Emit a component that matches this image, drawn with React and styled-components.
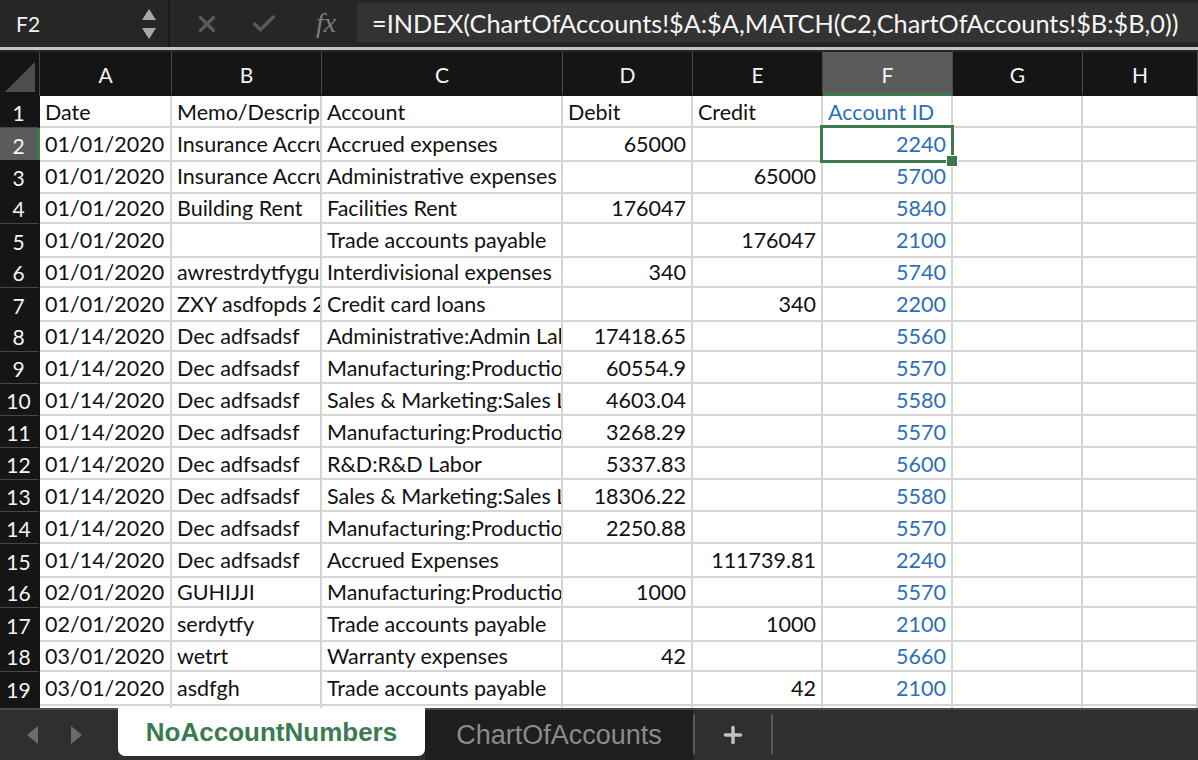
import React from "react";
import styled, { createGlobalStyle } from "styled-components";
import { X, Check, Plus } from "lucide-react";

const GlobalStyle = createGlobalStyle`
  html, body {
    margin: 0;
    padding: 0;
    background: #262626;
    overflow: hidden;
  }
  * {
    box-sizing: border-box;
  }
`;

const GRID = "40px 132px 150px 241px 130px 130px 130px 130px 1fr";
const GREEN = "#3c7a4e";
const LINE = "#d5d5d5";
const CELL_FONT = `Lato, "Open Sans", sans-serif`;

const columns = ["A", "B", "C", "D", "E", "F", "G", "H"];

const rows = [
  ["Date", "Memo/Description", "Account", "Debit", "Credit", "Account ID"],
  ["01/01/2020", "Insurance Accrual", "Accrued expenses", "65000", "", "2240"],
  ["01/01/2020", "Insurance Accrual", "Administrative expenses", "", "65000", "5700"],
  ["01/01/2020", "Building Rent", "Facilities Rent", "176047", "", "5840"],
  ["01/01/2020", "", "Trade accounts payable", "", "176047", "2100"],
  ["01/01/2020", "awrestrdytfyguhijk", "Interdivisional expenses", "340", "", "5740"],
  ["01/01/2020", "ZXY asdfopds 2019", "Credit card loans", "", "340", "2200"],
  ["01/14/2020", "Dec adfsadsf", "Administrative:Admin Labor", "17418.65", "", "5560"],
  ["01/14/2020", "Dec adfsadsf", "Manufacturing:Production Labor", "60554.9", "", "5570"],
  ["01/14/2020", "Dec adfsadsf", "Sales & Marketing:Sales Labor", "4603.04", "", "5580"],
  ["01/14/2020", "Dec adfsadsf", "Manufacturing:Production Labor", "3268.29", "", "5570"],
  ["01/14/2020", "Dec adfsadsf", "R&D:R&D Labor", "5337.83", "", "5600"],
  ["01/14/2020", "Dec adfsadsf", "Sales & Marketing:Sales Labor", "18306.22", "", "5580"],
  ["01/14/2020", "Dec adfsadsf", "Manufacturing:Production Labor", "2250.88", "", "5570"],
  ["01/14/2020", "Dec adfsadsf", "Accrued Expenses", "", "111739.81", "2240"],
  ["02/01/2020", "GUHIJJI", "Manufacturing:Production Labor", "1000", "", "5570"],
  ["02/01/2020", "serdytfy", "Trade accounts payable", "", "1000", "2100"],
  ["03/01/2020", "wetrt", "Warranty expenses", "42", "", "5660"],
  ["03/01/2020", "asdfgh", "Trade accounts payable", "", "42", "2100"],
  ["", "", "", "", "", ""],
];

const Window = styled.div`
  width: 1198px;
  height: 760px;
  display: flex;
  flex-direction: column;
  background: #262626;
  font-family: ${CELL_FONT};
`;

/* formula bar */
const FormulaBar = styled.div`
  height: 47px;
  display: flex;
  align-items: stretch;
  background: #262626;
`;

const NameBox = styled.div`
  width: 170px;
  display: flex;
  align-items: center;
  justify-content: space-between;
  padding: 0 12px 0 16px;
  border-right: 2px solid #1b1b1b;
  color: #f2f2f2;
  font-size: 21px;
`;

const Stepper = styled.div`
  display: flex;
  flex-direction: column;
  gap: 6px;
`;

const Actions = styled.div`
  width: 187px;
  display: flex;
  align-items: center;
  gap: 30px;
  padding-left: 24px;
  color: #5a5a5a;
`;

const Fx = styled.span`
  font-family: "Liberation Serif", serif;
  font-style: italic;
  font-size: 28px;
  color: #7c7c7c;
  margin-left: 8px;
  margin-top: -2px;
`;

const FormulaInput = styled.div`
  flex: 1;
  margin: 3px 0 5px;
  background: #333333;
  color: #f5f5f5;
  font-size: 25.3px;
  display: flex;
  align-items: center;
  padding-left: 15px;
  white-space: nowrap;
  overflow: hidden;
`;

const Divider = styled.div`
  height: 5px;
  background: #262626;
  border-top: 3px solid #c4c4c4;
`;

/* grid */
const HeaderRow = styled.div`
  display: grid;
  grid-template-columns: ${GRID};
  height: 44px;
  background: #151515;
`;

const Corner = styled.div`
  position: relative;
  border-right: 1px solid #444;
  &::after {
    content: "";
    position: absolute;
    right: 4px;
    bottom: 4px;
    border-style: solid;
    border-width: 0 0 30px 30px;
    border-color: transparent transparent #4e4e4e transparent;
  }
`;

const ColHead = styled.div`
  display: flex;
  align-items: center;
  justify-content: center;
  color: #f4f4f4;
  font-size: 21px;
  border-right: 1px solid #4a4a4a;
  background: ${(p) => (p.$active ? "#5b5b5b" : "#151515")};
  border-bottom: 3px solid ${(p) => (p.$active ? GREEN : "#151515")};
  padding-top: 3px;
`;

const Sheet = styled.div`
  flex: 1;
  overflow: hidden;
  background: #ffffff;
`;

const Row = styled.div`
  display: grid;
  grid-template-columns: ${GRID};
  height: 32px;
`;

const RowHead = styled.div`
  background: ${(p) => (p.$active ? "#5b5b5b" : "#151515")};
  color: #f4f4f4;
  font-size: 21px;
  display: flex;
  align-items: center;
  justify-content: center;
  padding-top: 1px;
  border-bottom: 1px solid #474747;
  border-right: 3px solid ${(p) => (p.$active ? GREEN : "#151515")};
`;

const Cell = styled.div`
  position: relative;
  border-right: 2px solid ${LINE};
  border-bottom: 2px solid ${LINE};
  padding: 1px 5px 0;
  font-size: 21.5px;
  line-height: 31px;
  white-space: nowrap;
  overflow: ${(p) => (p.$spill || p.$selected ? "visible" : "hidden")};
  text-align: ${(p) => (p.$right ? "right" : "left")};
  color: ${(p) => (p.$blue ? "#2e6fb7" : "#111111")};
  z-index: ${(p) => (p.$selected ? 2 : p.$spill ? 1 : 0)};
`;

const Selection = styled.div`
  position: absolute;
  left: -3px;
  top: -3px;
  right: -3px;
  bottom: -3px;
  border: 3px solid ${GREEN};
  pointer-events: none;
  &::after {
    content: "";
    position: absolute;
    right: -7px;
    bottom: -7px;
    width: 10px;
    height: 10px;
    background: ${GREEN};
    border: 1px solid #fff;
  }
`;

/* sheet tabs */
const TabBar = styled.div`
  height: 52px;
  display: flex;
  background: #2f2f2f;
  border-top: 2px solid #4a4a4a;
`;

const TabNav = styled.div`
  width: 118px;
  display: flex;
  align-items: center;
  gap: 29px;
  padding-left: 26px;
`;

const Tab = styled.div`
  display: flex;
  align-items: center;
  justify-content: center;
  width: ${(p) => p.$width}px;
  font-family: "Liberation Sans", Arial, sans-serif;
  font-size: ${(p) => (p.$active ? 26 : 27)}px;
  font-weight: ${(p) => (p.$active ? 700 : 400)};
  color: ${(p) => (p.$active ? "#3a7b51" : "#8b8b8b")};
  background: ${(p) => (p.$active ? "#ffffff" : "#1e1e1e")};
  border-radius: ${(p) => (p.$active ? "0 0 7px 7px" : "0")};
  margin: ${(p) => (p.$active ? "-2px 0 4px" : "0")};
`;

const TabDivider = styled.div`
  width: 2px;
  margin: 4px 0 6px;
  background: #585858;
`;

const AddTab = styled.div`
  width: 76px;
  display: flex;
  align-items: center;
  justify-content: center;
  color: #c2c2c2;
`;

const Triangle = ({ dir, color }) => {
  const pts = {
    up: "0,12 7,1 14,12",
    down: "0,1 7,12 14,1",
    left: "12,0 1,9 12,18",
    right: "2,0 13,9 2,18",
  };
  const vertical = dir === "up" || dir === "down";
  return (
    <svg
      width={14}
      height={vertical ? 13 : 18}
      viewBox={vertical ? "0 0 14 13" : "0 0 14 18"}
    >
      <polygon points={pts[dir]} fill={color} />
    </svg>
  );
};

const App = () => {
  return (
    <Window>
      <GlobalStyle />
      <FormulaBar>
        <NameBox>
          F2
          <Stepper>
            <Triangle dir="up" color="#a8a8a8" />
            <Triangle dir="down" color="#a8a8a8" />
          </Stepper>
        </NameBox>
        <Actions>
          <X size={26} strokeWidth={3} />
          <Check size={28} strokeWidth={3} />
          <Fx>fx</Fx>
        </Actions>
        <FormulaInput>
          =INDEX(ChartOfAccounts!$A:$A,MATCH(C2,ChartOfAccounts!$B:$B,0))
        </FormulaInput>
      </FormulaBar>
      <Divider />

      <HeaderRow>
        <Corner />
        {columns.map((c) => (
          <ColHead key={c} $active={c === "F"}>
            {c}
          </ColHead>
        ))}
      </HeaderRow>

      <Sheet>
        {rows.map((r, i) => {
          const n = i + 1;
          const cells = [...r, "", ""];
          return (
            <Row key={n}>
              <RowHead $active={n === 2}>{n <= 19 ? n : ""}</RowHead>
              {cells.map((v, j) => {
                const numeric = i > 0 && (j === 3 || j === 4 || j === 5);
                const spill = v !== "" && j < 3 && cells[j + 1] === "";
                const selected = n === 2 && j === 5;
                return (
                  <Cell
                    key={j}
                    $right={numeric}
                    $blue={j === 5}
                    $spill={spill}
                    $selected={selected}
                  >
                    {v}
                    {selected && <Selection />}
                  </Cell>
                );
              })}
            </Row>
          );
        })}
      </Sheet>

      <TabBar>
        <TabNav>
          <Triangle dir="left" color="#6b6b6b" />
          <Triangle dir="right" color="#6b6b6b" />
        </TabNav>
        <Tab $active $width={307}>
          NoAccountNumbers
        </Tab>
        <Tab $width={268}>ChartOfAccounts</Tab>
        <TabDivider />
        <AddTab>
          <Plus size={26} strokeWidth={3.2} />
        </AddTab>
        <TabDivider />
      </TabBar>
    </Window>
  );
};

export default App;
